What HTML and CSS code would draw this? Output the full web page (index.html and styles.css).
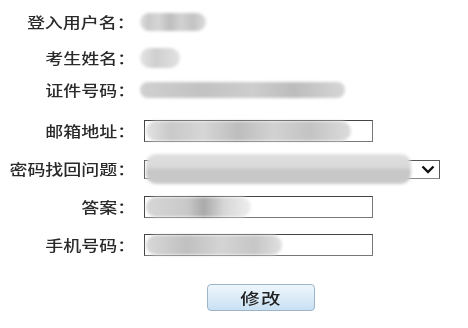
FILE: index.html
```html
<!DOCTYPE html>
<html lang="zh-CN">
<head>
<meta charset="utf-8">
<title>修改信息</title>
<link rel="stylesheet" href="styles.css">
</head>
<body>
<form class="form">
  <div class="row row-text">
    <div class="label"><span class="label-text">登入用户名：</span></div>
    <div class="value"><span class="blob blob-user"></span></div>
  </div>
  <div class="row row-text">
    <div class="label"><span class="label-text">考生姓名：</span></div>
    <div class="value"><span class="blob blob-name"></span></div>
  </div>
  <div class="row row-text row-id">
    <div class="label"><span class="label-text">证件号码：</span></div>
    <div class="value"><span class="blob blob-id"></span></div>
  </div>
  <div class="row">
    <div class="label"><span class="label-text">邮箱地址：</span></div>
    <div class="field"><span class="blob blob-mail"></span></div>
  </div>
  <div class="row">
    <div class="label"><span class="label-text">密码找回问题：</span></div>
    <div class="select">
      <span class="blob blob-question"></span>
      <svg class="chev" width="14" height="9" viewBox="0 0 14 9"><path d="M1.5 1.5 L7 7 L12.5 1.5" fill="none" stroke="#111" stroke-width="2.4"/></svg>
    </div>
  </div>
  <div class="row">
    <div class="label"><span class="label-text">答案：</span></div>
    <div class="field"><span class="blob blob-answer"></span></div>
  </div>
  <div class="row">
    <div class="label"><span class="label-text">手机号码：</span></div>
    <div class="field"><span class="blob blob-phone"></span></div>
  </div>
  <div class="actions">
    <button type="button" class="btn"><span class="btn-text">修改</span></button>
  </div>
</form>
</body>
</html>
```

FILE: styles.css
```css
html, body {
  margin: 0;
  padding: 0;
  background: #fff;
}
body {
  width: 468px;
  height: 328px;
  overflow: hidden;
  font-family: "Noto Sans CJK SC", "Noto Sans", sans-serif;
  color: #2a2a2a;
}
.form {
  display: flex;
  flex-direction: column;
  gap: 16px;
  padding-top: 12px;
}
.row {
  display: flex;
  align-items: center;
  height: 22px;
}
.row-text {
  height: 20px;
}
.row-id {
  margin-top: -4px;
  margin-bottom: 4px;
}
.label {
  width: 136px;
  flex: none;
  text-align: right;
  font-size: 14.5px;
  font-weight: 500;
  line-height: 20px;
  white-space: nowrap;
}
.label-text {
  display: inline-block;
  transform: scaleX(1.24);
  transform-origin: right center;
  padding-right: 1px;
}
.value {
  margin-left: 4px;
  height: 20px;
  display: flex;
  align-items: center;
}
.field {
  margin-left: 8px;
  width: 227px;
  height: 20px;
  border: 1px solid #444;
  border-right-color: #777;
  border-bottom-color: #777;
  display: flex;
  align-items: center;
}
.select {
  margin-left: 8px;
  width: 294px;
  height: 17px;
  border: 1px solid #555;
  border-bottom-color: #888;
  display: flex;
  align-items: center;
  justify-content: space-between;
}
.chev {
  margin-right: 4px;
}
.blob {
  display: block;
  border-radius: 10px;
  filter: blur(1.5px);
  background: linear-gradient(90deg, #e2e2e2 0%, #c9c9c9 12%, #d6d6d6 28%, #bdbdbd 45%, #d2d2d2 62%, #c3c3c3 80%, #dcdcdc 100%);
}
.blob-user { width: 66px; height: 18px; }
.blob-name { width: 40px; height: 20px; background: linear-gradient(90deg, #e4e4e4, #cfcfcf 40%, #e2e2e2); }
.blob-id { width: 205px; height: 16px; background: linear-gradient(90deg, #d0d0d0, #c2c2c2 30%, #cdcdcd 55%, #bcbcbc 75%, #d6d6d6); }
.blob-mail { width: 205px; height: 20px; margin-left: 1px; }
.blob-question {
  width: 265px;
  height: 30px;
  margin-left: 1px;
  background: linear-gradient(180deg, #e0e0e0 0%, #d8d8d8 45%, #c6c6c6 55%, #cacaca 100%);
}
.blob-answer { width: 105px; height: 20px; margin-left: 1px; background: linear-gradient(90deg, #d6d6d6, #c8c8c8 40%, #a9a9a9 55%, #d8d8d8 75%, #eeeeee); }
.blob-phone { width: 136px; height: 20px; margin-left: 1px; background: linear-gradient(90deg, #d8d8d8, #c0c0c0 30%, #d4d4d4 55%, #c6c6c6 80%, #e0e0e0); }
.actions {
  margin-top: 12px;
  padding-left: 207px;
}
.btn {
  width: 108px;
  height: 27px;
  border: 1px solid #9cb3c8;
  border-radius: 4px;
  background: linear-gradient(180deg, #eef6fc 0%, #dcecf8 50%, #c8e0f3 100%);
  font-family: "Noto Sans CJK SC", "Noto Sans", sans-serif;
  font-size: 15px;
  font-weight: 500;
  color: #222;
  padding: 0;
  line-height: 25px;
}
.btn-text {
  display: inline-block;
  transform: scaleX(1.3);
  letter-spacing: 1px;
}
```
